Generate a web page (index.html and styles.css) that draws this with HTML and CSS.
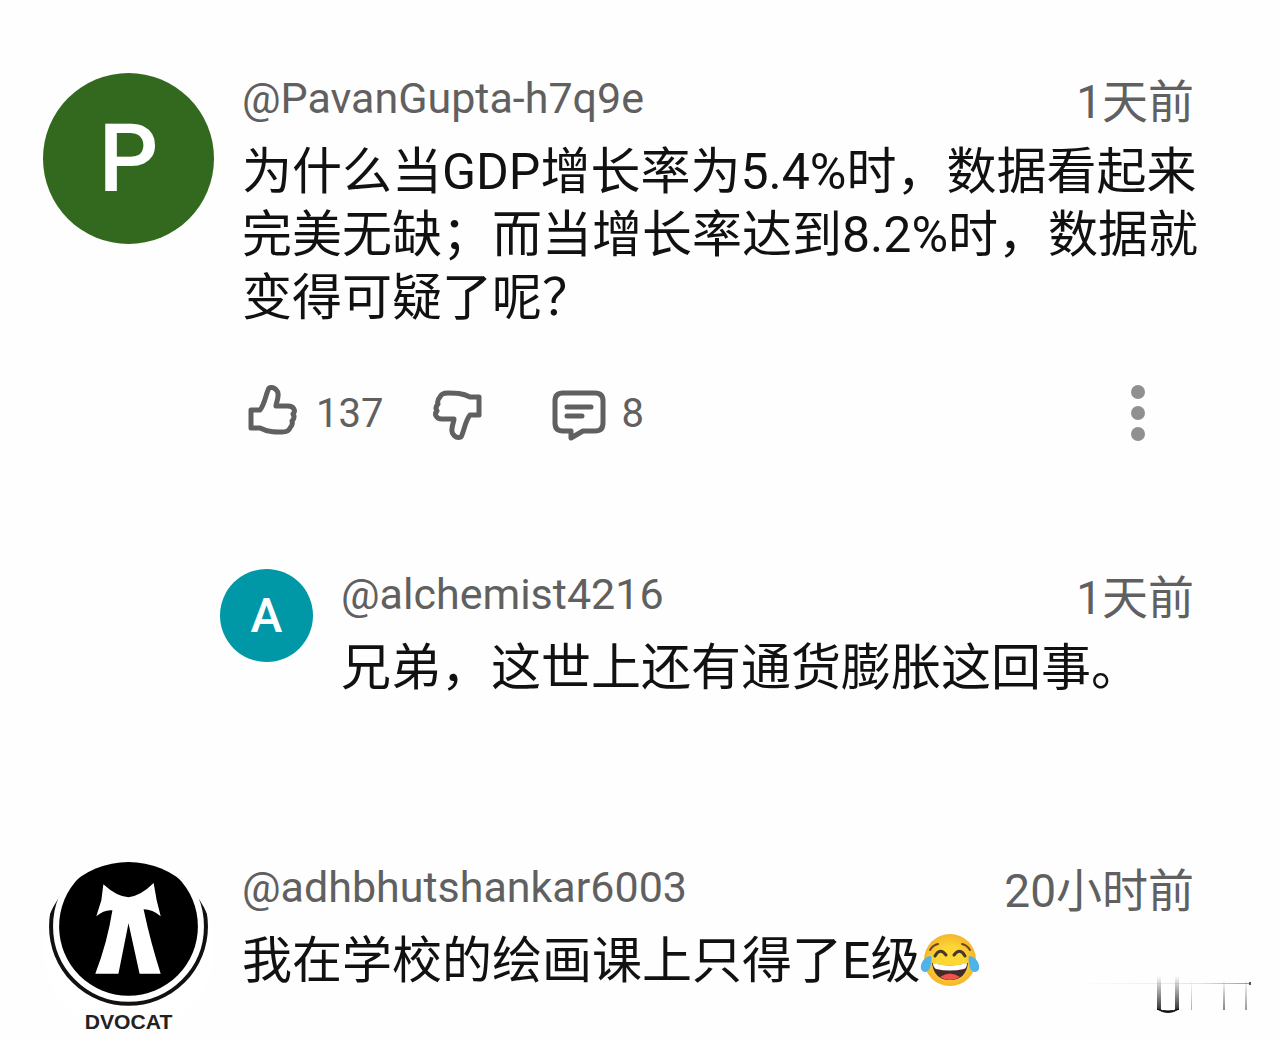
FILE: index.html
```
<!DOCTYPE html>
<html lang="zh-CN">
<head>
    <meta charset="UTF-8">
    <meta name="viewport" content="width=device-width, initial-scale=1">
    <link rel="stylesheet" href="styles.css">
    <title>评论</title>
</head>
<body>
<main class="comments">
    <article class="comment">
        <div class="avatar avatarGreen">P</div>
        <div class="commentBody">
            <header class="commentHeader">
                <a class="userName" href="#">@PavanGupta-h7q9e</a>
                <time class="commentTime">1天前</time>
            </header>
            <p class="commentText">为什么当GDP增长率为5.4%时，数据看起来完美无缺；而当增长率达到8.2%时，数据就变得可疑了呢？</p>
            <div class="actions">
                <button class="actionButton likeButton" type="button" aria-label="赞">
                    <svg width="52" height="56" viewBox="0 2 52 56">
                        <path d="M3 27H12C17 21 18 10 21 5C26 3 31 8 30 13C30 17 28 20 28 23H40C46 23 48 28 45 31C47 34 46 36 44 38C45 41 44 43 42 45C41 48 38 49 34 49C26 49 20 49 12 45H3Z"/>
                    </svg>
                    <span>137</span>
                </button>
                <button class="actionButton dislikeButton" type="button" aria-label="踩">
                    <svg width="52" height="56" viewBox="0 2 52 56">
                        <path d="M48 32H39C34 38 33 49 30 54C25 56 20 51 21 46C21 42 23 39 23 36H11C5 36 3 31 6 28C4 25 5 23 7 21C6 18 7 16 9 14C10 11 13 10 17 10C25 10 31 10 39 14H48Z"/>
                    </svg>
                </button>
                <button class="actionButton replyButton" type="button" aria-label="回复">
                    <svg width="56" height="56" viewBox="0 2 56 56">
                        <path d="M12 10H44Q52 10 52 18V40Q52 48 44 48H32L20 55V48H12Q4 48 4 40V18Q4 10 12 10Z"/>
                        <path d="M16 24H40M16 33H31"/>
                    </svg>
                    <span>8</span>
                </button>
                <button class="menuButton" type="button" aria-label="更多">
                    <svg width="16" height="60" viewBox="0 0 16 60">
                        <circle cx="8" cy="9" r="7"/>
                        <circle cx="8" cy="30" r="7"/>
                        <circle cx="8" cy="51" r="7"/>
                    </svg>
                </button>
            </div>
        </div>
    </article>

    <article class="comment reply">
        <div class="avatar avatarTeal">A</div>
        <div class="commentBody">
            <header class="commentHeader">
                <a class="userName" href="#">@alchemist4216</a>
                <time class="commentTime">1天前</time>
            </header>
            <p class="commentText">兄弟，这世上还有通货膨胀这回事。</p>
        </div>
    </article>

    <article class="comment">
        <svg class="avatarPicture" viewBox="0 0 170 170" role="img" aria-label="Advocate">
            <defs>
                <clipPath id="avatarClip"><circle cx="85" cy="85" r="85"/></clipPath>
            </defs>
            <g clip-path="url(#avatarClip)">
                <rect width="170" height="170" fill="#fff"/>
                <circle cx="85" cy="64" r="77" fill="#fff" stroke="#111" stroke-width="4"/>
                <circle cx="85" cy="64" r="69" fill="#000"/>
                <path fill="#fff" d="M60 22Q73 34 85 35Q97 34 110 21L113 38L117 54Q109 47 100 47Q107 80 117 111H96L85 61L75 111H52Q64 80 69 48Q61 47 53 54L58 38Z"/>
            </g>
            <text class="avatarLabel" x="85" y="166" text-anchor="middle">DVOCAT</text>
        </svg>
        <div class="commentBody">
            <header class="commentHeader">
                <a class="userName" href="#">@adhbhutshankar6003</a>
                <time class="commentTime">20小时前</time>
            </header>
            <p class="commentText">我在学校的绘画课上只得了E级<svg class="emoji" viewBox="0 0 60 60" role="img" aria-label="笑哭">
                <defs>
                    <radialGradient id="face">
                        <stop offset="0.5" stop-color="#fdd835"/>
                        <stop offset="1" stop-color="#f4b62c"/>
                    </radialGradient>
                </defs>
                <circle cx="30" cy="30" r="26" fill="url(#face)"/>
                <path d="M10 20Q13 15 18 14M50 20Q47 15 42 14" fill="none" stroke="#6d4520" stroke-width="2" stroke-linecap="round"/>
                <path d="M15 26Q20 17 26 25M34 25Q40 17 45 26" fill="none" stroke="#49362c" stroke-width="3" stroke-linecap="round"/>
                <path d="M12 33Q30 38 48 33Q46 50 30 50Q14 50 12 33Z" fill="#422b28"/>
                <path d="M13 33Q30 38 47 33Q47 38 44 39Q30 42 16 39Q13 37 13 33Z" fill="#fff"/>
                <path d="M20 47Q30 40 40 47Q30 53 20 47Z" fill="#ef5350"/>
                <path d="M11 26C4 27 0 33 1 39C3 44 9 42 10 38C11 34 12 30 11 26ZM49 26C56 27 60 33 59 39C57 44 51 42 50 38C49 34 48 30 49 26Z" fill="#4fb3ea"/>
            </svg></p>
        </div>
    </article>
</main>

<svg class="watermark" width="180" height="44" viewBox="0 0 180 44" aria-hidden="true">
    <defs>
        <linearGradient id="fadeDown" x1="0" y1="0" x2="0" y2="1">
            <stop offset="0" stop-color="#000" stop-opacity="0"/>
            <stop offset="1" stop-color="#000" stop-opacity="0.8"/>
        </linearGradient>
        <linearGradient id="fadeRight">
            <stop offset="0" stop-color="#000" stop-opacity="0"/>
            <stop offset="0.7" stop-color="#000" stop-opacity="0.1"/>
            <stop offset="1" stop-color="#000" stop-opacity="0.4"/>
        </linearGradient>
    </defs>
    <rect x="0" y="11" width="171" height="1" fill="url(#fadeRight)"/>
    <rect x="169" y="10" width="2" height="3" fill="#555"/>
    <rect x="77" y="4" width="4" height="34" fill="url(#fadeDown)"/>
    <rect x="95" y="4" width="4" height="34" fill="url(#fadeDown)"/>
    <path d="M77 37Q88 41 99 37Q88 44 77 37Z" fill="#111" stroke="#111"/>
    <rect x="111" y="8" width="1" height="30" fill="url(#fadeDown)" opacity="0.4"/>
    <rect x="143" y="8" width="2" height="30" fill="url(#fadeDown)" opacity="0.6"/>
    <rect x="165" y="8" width="2" height="30" fill="url(#fadeDown)" opacity="0.5"/>
</svg>
</body>
</html>
```
FILE: styles.css
```
body {
    margin: 0;
    background-color: #fefefe;
    color: #111;
    font-family: Roboto, "Noto Sans CJK SC", sans-serif;
}

.comments {
    padding: 73px 80px 0 43px;
}

.comment {
    display: flex;
    align-items: flex-start;
    gap: 28px;
    margin-bottom: 126px;
}

.comment:last-child {
    margin-bottom: 0;
}

.reply {
    margin-left: 177px;
    margin-bottom: 162px;
}

.avatar {
    display: flex;
    flex-shrink: 0;
    align-items: center;
    justify-content: center;
    border-radius: 50%;
    color: white;
    font-weight: 500;
}

.avatarGreen {
    width: 171px;
    height: 171px;
    background-color: #33691e;
    font-size: 94px;
}

.avatarTeal {
    width: 93px;
    height: 93px;
    background-color: #0097a7;
    font-size: 48px;
}

.avatarPicture {
    flex-shrink: 0;
    width: 171px;
    height: 171px;
}

.avatarLabel {
    fill: #222;
    font-family: "Liberation Sans", sans-serif;
    font-size: 21px;
    font-weight: bold;
}

.commentBody {
    flex: 1;
    min-width: 0;
}

.commentHeader {
    display: flex;
    align-items: flex-start;
    justify-content: space-between;
    padding-right: 6px;
}

.userName {
    color: #606060;
    font-size: 43px;
    line-height: 50px;
    text-decoration: none;
}

.commentTime {
    color: #606060;
    font-size: 46px;
    line-height: 58px;
}

.commentText {
    margin: 10px 0 0;
    font-size: 50px;
    line-height: 63px;
}

.emoji {
    width: 60px;
    height: 60px;
    vertical-align: -12px;
}

.actions {
    display: flex;
    align-items: center;
    margin-top: 53px;
    padding-right: 54px;
}

.actionButton {
    display: flex;
    align-items: center;
    padding: 0;
    border: none;
    background: none;
    color: #606060;
    font-family: inherit;
    font-size: 40px;
    cursor: pointer;
}

.actionButton svg {
    fill: none;
    stroke: #606060;
    stroke-width: 5px;
    stroke-linejoin: round;
    stroke-linecap: round;
}

.likeButton {
    gap: 16px;
    margin: 0 48px 0 6px;
}

.dislikeButton {
    margin-right: 68px;
}

.replyButton {
    gap: 14px;
}

.menuButton {
    margin-left: auto;
    padding: 0;
    border: none;
    background: none;
    cursor: pointer;
}

.menuButton svg {
    display: block;
    fill: #909090;
}

.watermark {
    position: absolute;
    right: 20px;
    top: 972px;
}
```
